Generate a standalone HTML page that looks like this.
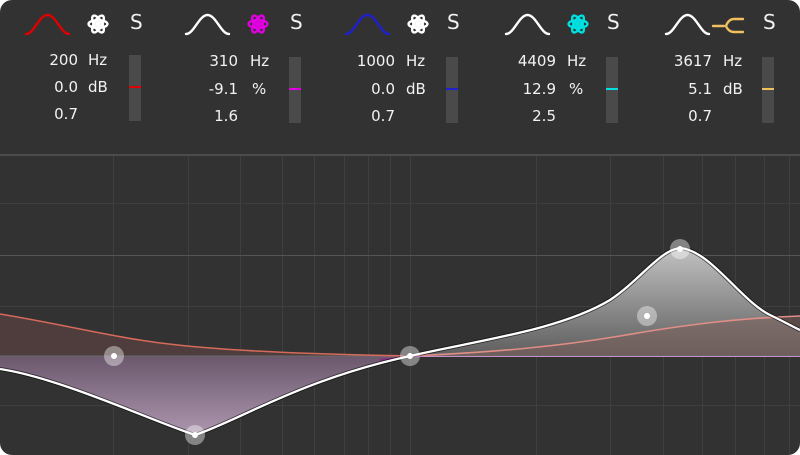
<!DOCTYPE html>
<html><head><meta charset="utf-8"><style>
html,body{margin:0;padding:0;background:#fff;}
.w{position:relative;width:800px;height:455px;background:#323232;border-radius:12px;overflow:hidden;font-family:"DejaVu Sans","Liberation Sans",sans-serif;color:#f2f2f2;}
.t{position:absolute;font-size:15px;line-height:18px;}
.r{text-align:right;width:60px;}
</style></head><body><div class="w">
<svg width="800" height="455" style="position:absolute;left:0;top:0">
<defs>
<symbol id="atom" viewBox="-10 -10 20 20">
<g fill="none" stroke-width="2.2">
<ellipse rx="8.6" ry="3.6"/>
<ellipse rx="8.6" ry="3.6" transform="rotate(60)"/>
<ellipse rx="8.6" ry="3.6" transform="rotate(-60)"/>
</g><circle r="2.2"/>
</symbol>
<linearGradient id="gp" x1="0" y1="356" x2="0" y2="440" gradientUnits="userSpaceOnUse"><stop offset="0" stop-color="#6e5a70"/><stop offset="1" stop-color="#b7a0b9"/></linearGradient>
<linearGradient id="gg" x1="0" y1="250" x2="0" y2="356" gradientUnits="userSpaceOnUse"><stop offset="0" stop-color="#c0c0c0"/><stop offset="1" stop-color="#5e5e5e"/></linearGradient>
</defs>
<line x1="0" y1="155" x2="800" y2="155" stroke="#555" stroke-width="1.5"/>
<g stroke="#3f3f3f" stroke-width="1">
<line x1="0" y1="203.5" x2="800" y2="203.5"/><line x1="0" y1="306.5" x2="800" y2="306.5"/><line x1="0" y1="405.5" x2="800" y2="405.5"/>
<line x1="113.5" y1="156" x2="113.5" y2="455"/><line x1="188.5" y1="156" x2="188.5" y2="455"/><line x1="240.5" y1="156" x2="240.5" y2="455"/><line x1="282.5" y1="156" x2="282.5" y2="455"/><line x1="314.5" y1="156" x2="314.5" y2="455"/><line x1="344.5" y1="156" x2="344.5" y2="455"/><line x1="368.5" y1="156" x2="368.5" y2="455"/><line x1="390.5" y1="156" x2="390.5" y2="455"/><line x1="410.5" y1="156" x2="410.5" y2="455"/><line x1="536.5" y1="156" x2="536.5" y2="455"/><line x1="610.5" y1="156" x2="610.5" y2="455"/><line x1="663.5" y1="156" x2="663.5" y2="455"/><line x1="702.5" y1="156" x2="702.5" y2="455"/><line x1="735.5" y1="156" x2="735.5" y2="455"/><line x1="764.5" y1="156" x2="764.5" y2="455"/><line x1="789.5" y1="156" x2="789.5" y2="455"/>
</g>
<line x1="0" y1="255.5" x2="800" y2="255.5" stroke="#555" stroke-width="1"/>
<path d="M0,314 C60,324 100,334 140,340 C200,350 300,354 410,356 L0,356Z" fill="#4e3d3c"/>
<path d="M0,369 C60,378 150,420 195,435 C240,420 300,380 410,356 L0,356Z" fill="url(#gp)" opacity="0.95"/>
<path d="M410,356 C480,340 560,330 610,300 C640,280 660,250 680,248 C710,250 740,300 770,315 C785,322 795,328 800,330 L800,356Z" fill="url(#gg)"/>
<path d="M410,356 C500,352 560,346 620,336 C700,322 750,318 800,316 L800,356Z" fill="#7a5d5a" opacity="0.55"/>
<line x1="0" y1="356" x2="800" y2="356" stroke="#6a6a6a" stroke-width="1"/>
<line x1="410" y1="356.5" x2="800" y2="356.5" stroke="#c78fc9" stroke-width="1"/>
<path d="M0,314 C60,324 100,334 140,340 C200,350 300,354 410,356" fill="none" stroke="#d56a5a" stroke-width="1.6"/>
<path d="M410,356 C500,352 560,346 620,336 C700,322 750,318 800,316" fill="none" stroke="#e08e86" stroke-width="1.6"/>
<path d="M380,360 C395,358 405,357 420,356" fill="none" stroke="#8a2a8a" stroke-width="2"/>
<path d="M0,369 C60,378 150,420 195,435 C240,420 300,380 410,356 C480,340 560,330 610,300 C640,280 660,250 680,248 C710,250 740,300 770,315 C785,322 795,328 800,330" fill="none" stroke="#000" stroke-width="4" opacity="0.6"/>
<path d="M0,369 C60,378 150,420 195,435 C240,420 300,380 410,356 C480,340 560,330 610,300 C640,280 660,250 680,248 C710,250 740,300 770,315 C785,322 795,328 800,330" fill="none" stroke="#fff" stroke-width="2.3"/>
<g fill="#fff"><circle cx="114" cy="356" r="10" opacity="0.4"/><circle cx="195" cy="435" r="10" opacity="0.4"/><circle cx="410" cy="356" r="10" opacity="0.4"/><circle cx="680" cy="249" r="10" opacity="0.4"/><circle cx="647" cy="316" r="10" opacity="0.4"/>
<circle cx="114" cy="356" r="3"/><circle cx="195" cy="435" r="3"/><circle cx="410" cy="356" r="3"/><circle cx="680" cy="249" r="3"/><circle cx="647" cy="316" r="3"/></g>
<g fill="none" stroke-width="2.4" stroke-linecap="round">
<path d="M26,34 C34,34 39,15 47.5,15 C56,15 61,34 69,34" stroke="#e00000"/>
<path d="M186,34 C194,34 199,15 207.5,15 C216,15 221,34 229,34" stroke="#fff"/>
<path d="M346,34 C354,34 359,15 367.5,15 C376,15 381,34 389,34" stroke="#2020d0"/>
<path d="M506,34 C514,34 519,15 527.5,15 C536,15 541,34 549,34" stroke="#fff"/>
<path d="M666,34 C674,34 679,15 687.5,15 C696,15 701,34 709,34" stroke="#fff"/>
<path d="M713,26 H724 M743,19 H734 C728,19 726,26 726,26 C726,26 728,32 734,32 H743" stroke="#f0c060"/>
</g>
<use href="#atom" x="87" y="13" width="22" height="22" fill="#fff" stroke="#fff"/>
<use href="#atom" x="247" y="13" width="22" height="22" fill="#e000e0" stroke="#e000e0"/>
<use href="#atom" x="407" y="13" width="22" height="22" fill="#fff" stroke="#fff"/>
<use href="#atom" x="567" y="13" width="22" height="22" fill="#00e0e0" stroke="#00e0e0"/>
<g fill="#4a4a4a"><rect x="129" y="55" width="12" height="66"/><rect x="289" y="57" width="12" height="66"/><rect x="446" y="57" width="12" height="66"/><rect x="606" y="57" width="12" height="66"/><rect x="762" y="57" width="12" height="66"/></g>
<g stroke-width="2"><line x1="129" y1="87" x2="141" y2="87" stroke="#e00000"/><line x1="289" y1="89" x2="301" y2="89" stroke="#e000e0"/><line x1="446" y1="89" x2="458" y2="89" stroke="#2020d0"/><line x1="606" y1="89" x2="618" y2="89" stroke="#00e0e0"/><line x1="762" y1="89" x2="774" y2="89" stroke="#f0c060"/></g>
</svg>
<div class="t" style="left:130px;top:13px;font-size:20px">S</div>
<div class="t" style="left:290px;top:13px;font-size:20px">S</div>
<div class="t" style="left:447px;top:13px;font-size:20px">S</div>
<div class="t" style="left:607px;top:13px;font-size:20px">S</div>
<div class="t" style="left:763px;top:13px;font-size:20px">S</div>

<div class="t r" style="left:18px;top:51px">200</div><div class="t" style="left:88px;top:51px">Hz</div>
<div class="t r" style="left:18px;top:78px">0.0</div><div class="t" style="left:88px;top:78px">dB</div>
<div class="t r" style="left:18px;top:105px">0.7</div>

<div class="t r" style="left:178px;top:52px">310</div><div class="t" style="left:250px;top:52px">Hz</div>
<div class="t r" style="left:178px;top:80px">-9.1</div><div class="t" style="left:252px;top:80px">%</div>
<div class="t r" style="left:178px;top:107px">1.6</div>

<div class="t r" style="left:335px;top:52px">1000</div><div class="t" style="left:406px;top:52px">Hz</div>
<div class="t r" style="left:335px;top:80px">0.0</div><div class="t" style="left:406px;top:80px">dB</div>
<div class="t r" style="left:335px;top:107px">0.7</div>

<div class="t r" style="left:496px;top:52px">4409</div><div class="t" style="left:567px;top:52px">Hz</div>
<div class="t r" style="left:496px;top:80px">12.9</div><div class="t" style="left:569px;top:80px">%</div>
<div class="t r" style="left:496px;top:107px">2.5</div>

<div class="t r" style="left:652px;top:52px">3617</div><div class="t" style="left:723px;top:52px">Hz</div>
<div class="t r" style="left:652px;top:80px">5.1</div><div class="t" style="left:723px;top:80px">dB</div>
<div class="t r" style="left:652px;top:107px">0.7</div>
</div></body></html>
